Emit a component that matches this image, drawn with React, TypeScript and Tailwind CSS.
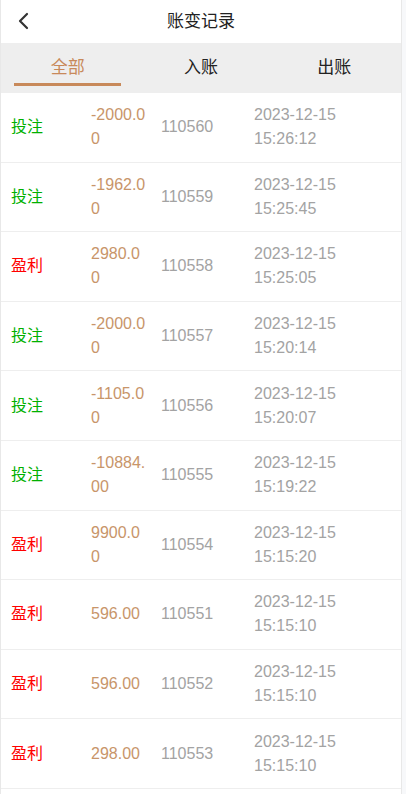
import React from 'react';

type Record = {
  type: '投注' | '盈利';
  amount: string;
  id: string;
  date: string;
  time: string;
};

const records: Record[] = [
  { type: '投注', amount: '-2000.00', id: '110560', date: '2023-12-15', time: '15:26:12' },
  { type: '投注', amount: '-1962.00', id: '110559', date: '2023-12-15', time: '15:25:45' },
  { type: '盈利', amount: '2980.00', id: '110558', date: '2023-12-15', time: '15:25:05' },
  { type: '投注', amount: '-2000.00', id: '110557', date: '2023-12-15', time: '15:20:14' },
  { type: '投注', amount: '-1105.00', id: '110556', date: '2023-12-15', time: '15:20:07' },
  { type: '投注', amount: '-10884.00', id: '110555', date: '2023-12-15', time: '15:19:22' },
  { type: '盈利', amount: '9900.00', id: '110554', date: '2023-12-15', time: '15:15:20' },
  { type: '盈利', amount: '596.00', id: '110551', date: '2023-12-15', time: '15:15:10' },
  { type: '盈利', amount: '596.00', id: '110552', date: '2023-12-15', time: '15:15:10' },
  { type: '盈利', amount: '298.00', id: '110553', date: '2023-12-15', time: '15:15:10' },
];

const tabs = ['全部', '入账', '出账'];

export default function App() {
  return (
    <div className="flex h-[794px] w-[406px] overflow-hidden bg-[#f7f8fa] font-['Liberation_Sans','Noto_Sans_CJK_SC',sans-serif]">
      <div className="w-[402px] shrink-0 border-l border-r border-[#e8e8e8] bg-white">
        {/* header */}
        <div className="relative flex h-[43px] items-center justify-center">
          <button className="absolute left-[16px] top-[11px] text-[#333]">
            <svg width="14" height="20" viewBox="0 0 14 20" fill="none">
              <path d="M10 3 L3 10 L10 17" stroke="currentColor" strokeWidth="2.2" strokeLinecap="round" strokeLinejoin="round" />
            </svg>
          </button>
          <h1 className="text-[17px] text-[#222]">账变记录</h1>
        </div>

        {/* tabs */}
        <div className="grid h-[50px] grid-cols-3 bg-[#eeeeee]">
          {tabs.map((t, i) => (
            <div key={t} className="relative flex items-center justify-center">
              <span className={`text-[17px] ${i === 0 ? 'text-[#c8895a]' : 'text-[#222]'}`}>{t}</span>
              {i === 0 && <div className="absolute bottom-[7px] left-[13px] right-[13px] h-[3px] bg-[#c8895a]" />}
            </div>
          ))}
        </div>

        {/* list */}
        <div>
          {records.map((r) => (
            <div key={r.id} className="flex h-[69.6px] items-center border-b border-[#eeeeee] text-[16px] leading-[24px]">
              <div className={`w-[90px] shrink-0 pl-[10px] ${r.type === '投注' ? 'text-[#00b000]' : 'text-[#ff0000]'}`}>
                {r.type}
              </div>
              <div className="w-[56px] shrink-0 break-all text-[#c8956a]">{r.amount}</div>
              <div className="ml-[14px] w-[93px] shrink-0 text-[#a3a3a3]">{r.id}</div>
              <div className="flex flex-col text-[#a3a3a3]">
                <span>{r.date}</span>
                <span>{r.time}</span>
              </div>
            </div>
          ))}
        </div>
      </div>
    </div>
  );
}
